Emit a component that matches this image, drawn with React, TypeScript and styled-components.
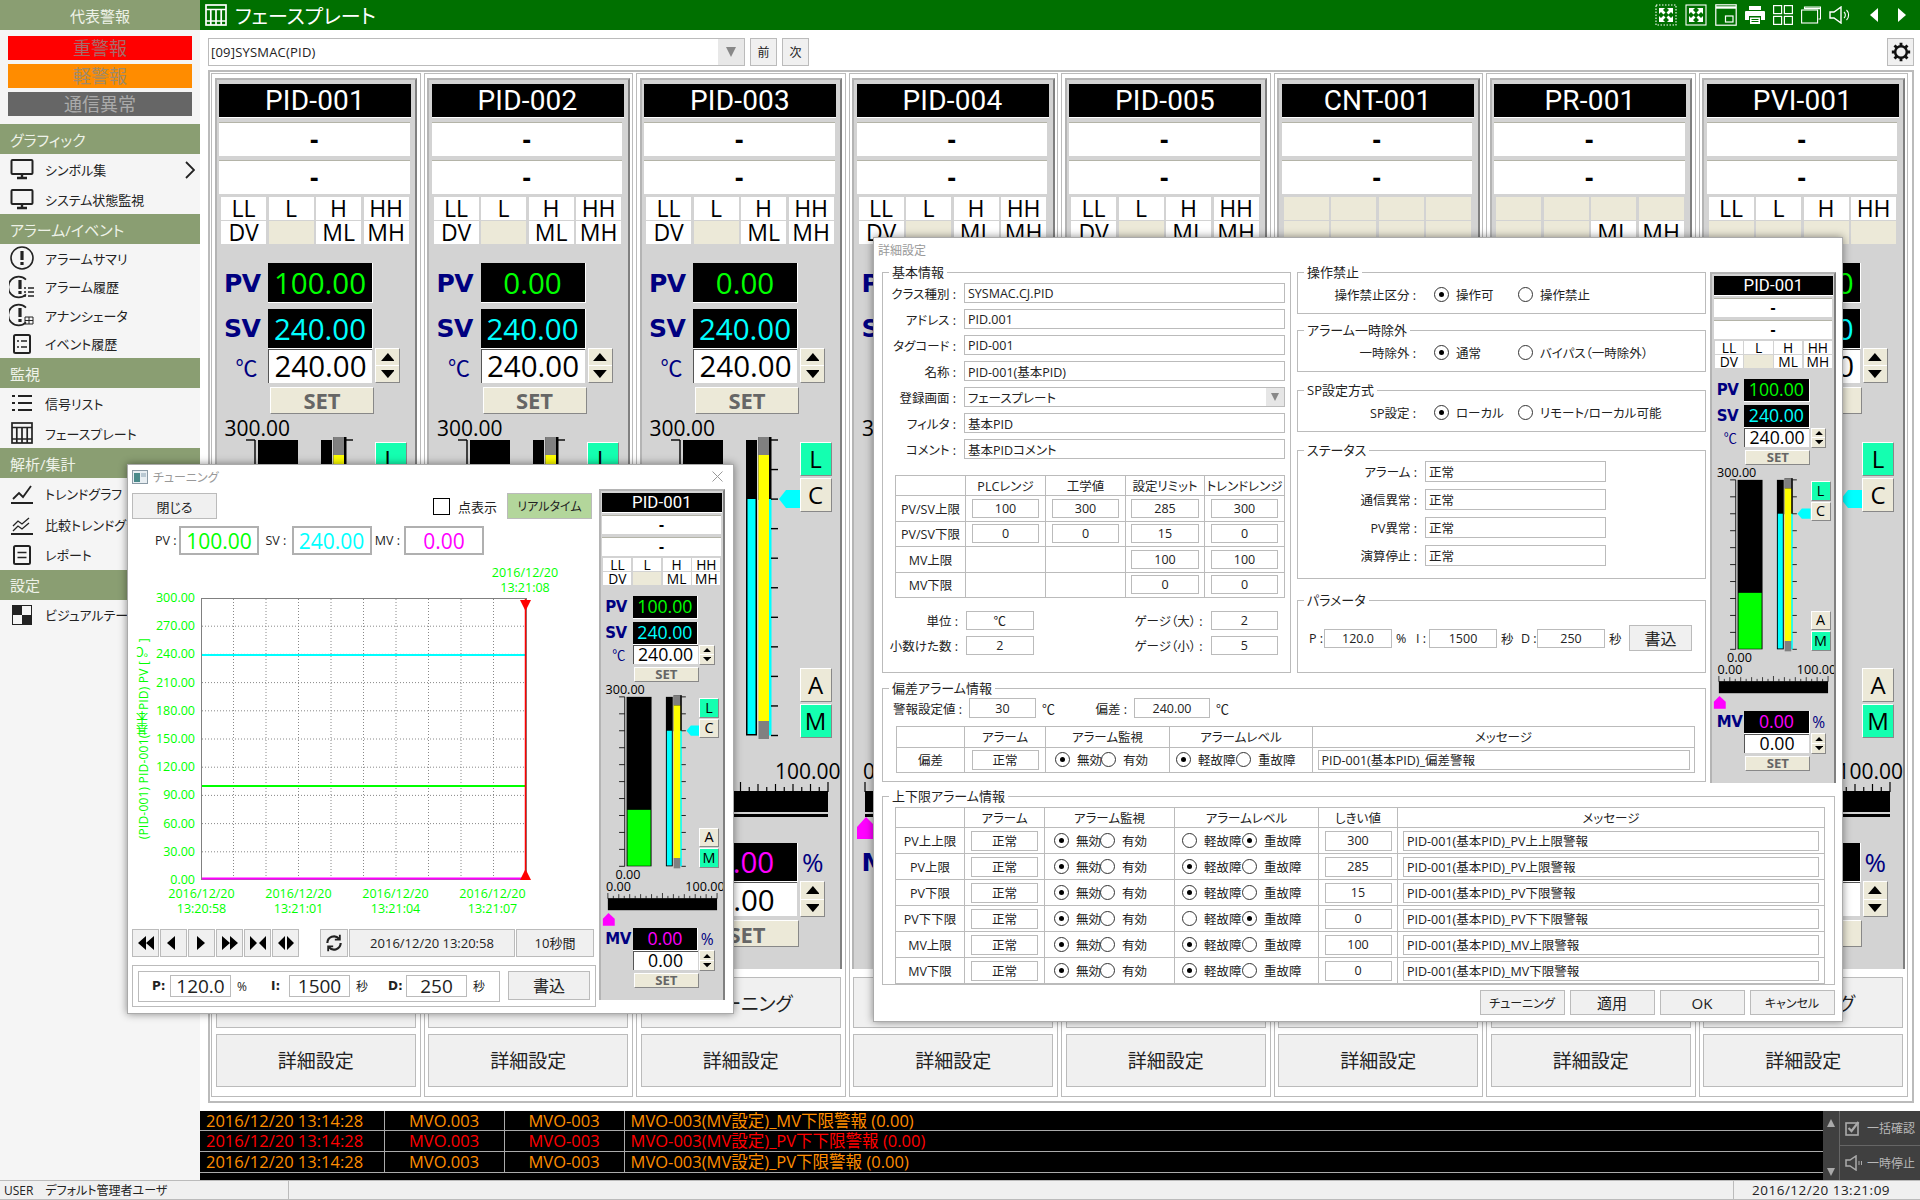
import React from "react";
import styled, { createGlobalStyle } from "styled-components";

const FONT = `"Open Sans", "Noto Sans CJK JP", sans-serif`;
const sx = (n: number) => `calc(var(--sx) * ${n}px)`;
const sy = (n: number) => `calc(var(--sy) * ${n}px)`;
const sf = (n: number) => `calc(var(--sf) * ${n}px)`;

const Global = createGlobalStyle`
  html, body { margin: 0; padding: 0; width: 1920px; height: 1200px; overflow: hidden; background: #fff; }
  body { font-family: ${FONT}; font-feature-settings: "palt"; color: #222; }
  * { box-sizing: border-box; }
`;

const Page = styled.div`
  position: relative;
  width: 1920px;
  height: 1200px;
  display: grid;
  grid-template-columns: 200px 1720px;
  grid-template-rows: 1180px 20px;
  overflow: hidden;
`;

/* ---------- sidebar ---------- */
const Sidebar = styled.aside`
  background: #f5f5f5;
  display: flex;
  flex-direction: column;
`;
const SideHead = styled.div<{ $center?: boolean }>`
  height: 30px;
  flex: none;
  background: #8a9e72;
  color: #eef2e8;
  font-size: 15px;
  display: flex;
  align-items: center;
  justify-content: ${(p) => (p.$center ? "center" : "flex-start")};
  padding-left: ${(p) => (p.$center ? 0 : 10)}px;
`;
const AlertStack = styled.div`
  display: flex;
  flex-direction: column;
  gap: 4px;
  padding: 6px 8px 8px;
`;
const AlertBox = styled.div<{ $bg: string; $fg: string }>`
  height: 24px;
  background: ${(p) => p.$bg};
  color: ${(p) => p.$fg};
  font-size: 18px;
  line-height: 24px;
  text-align: center;
`;
const SideItem = styled.div<{ $h: number }>`
  height: ${(p) => p.$h}px;
  flex: none;
  display: flex;
  align-items: center;
  position: relative;
  font-size: 13px;
  color: #222;
  white-space: nowrap;
`;
const SideIcon = styled.span`
  width: 45px;
  flex: none;
  display: flex;
  justify-content: center;
  padding-right: 2px;
`;
const Chevron = styled.svg`
  position: absolute;
  right: 5px;
  top: 7px;
`;

const Ic = ({ children, w = 26, h = 24 }: { children: React.ReactNode; w?: number; h?: number }) => (
  <svg width={w} height={h} viewBox="0 0 26 24" fill="none" stroke="#222" strokeWidth="2">{children}</svg>
);
const MonitorIcon = () => (
  <Ic>
    <rect x="2.5" y="3" width="21" height="14" rx="1" />
    <path d="M13 17v3M8 21h10" strokeWidth="2.4" />
  </Ic>
);
const AlarmGlyph = ({ open }: { open?: boolean }) => (
  <>
    {open ? <path d="M17 4.6A10.4 10.4 0 1 0 17 19.4" strokeWidth="1.6" /> : <circle cx="13" cy="12" r="11" strokeWidth="1.6" />}
    <path d={open ? "M11 5v9" : "M13 5v9"} strokeWidth="3.2" />
    <path d={open ? "M11 16v3" : "M13 16v3"} strokeWidth="3.2" />
  </>
);
const AlarmIcon = () => <Ic><AlarmGlyph /></Ic>;
const AlarmHistIcon = () => (
  <Ic>
    <AlarmGlyph open />
    <path d="M15 13h2M19 13h6M15 17h2M19 17h6M15 21h2M19 21h6" strokeWidth="1.3" />
  </Ic>
);
const AnnunIcon = () => (
  <Ic>
    <AlarmGlyph open />
    <path d="M16 14h8v7h-8zM20 14v7M16 17.5h8" strokeWidth="1" />
  </Ic>
);
const EventIcon = () => (
  <Ic>
    <rect x="5" y="3" width="16" height="18" rx="1.5" />
    <path d="M8 9h2M12 9h6M8 15h2M12 15h6" strokeWidth="1.6" />
  </Ic>
);
const ListIcon = () => (
  <Ic>
    <path d="M3 5h3M9 5h14M3 12h3M9 12h14M3 19h3M9 19h14" strokeWidth="2" />
  </Ic>
);
const GridIcon = ({ c = "#222" }: { c?: string }) => (
  <svg width="22" height="22" viewBox="0 0 22 22" fill="none" stroke={c} strokeWidth="1.7">
    <rect x="1" y="1" width="20" height="20" />
    <path d="M1 5.5h20M1 17h20M5.8 5.5V21M11 5.5V21M16.2 5.5V21" />
  </svg>
);
const TrendIcon = () => (
  <Ic>
    <path d="M2 22h22" />
    <path d="M4 18l6-6 4 4 8-11" strokeWidth="1.8" />
  </Ic>
);
const CompareIcon = () => (
  <Ic>
    <path d="M2 22h22" />
    <path d="M4 14l5-5 4 3 7-6M4 19l5-5 4 3 7-6" strokeWidth="1.3" />
  </Ic>
);
const ReportIcon = () => (
  <Ic>
    <rect x="5" y="3" width="16" height="18" rx="1.5" />
    <path d="M8.5 9.5h9M8.5 14.5h9" strokeWidth="1.6" />
  </Ic>
);
const ThemeIcon = () => (
  <svg width="20" height="20" viewBox="0 0 20 20">
    <rect width="20" height="20" fill="#222" />
    <rect x="10" width="10" height="10" fill="#f5f5f5" />
    <rect y="10" width="10" height="10" fill="#f5f5f5" />
    <rect x=".5" y=".5" width="19" height="19" fill="none" stroke="#222" />
  </svg>
);

/* ---------- main area ---------- */
const Main = styled.main`
  display: flex;
  flex-direction: column;
  min-width: 0;
`;
const TitleBar = styled.header`
  height: 30px;
  flex: none;
  background: #007000;
  color: #fff;
  display: flex;
  align-items: center;
  padding-left: 5px;
  font-size: 20px;
`;
const TitleText = styled.span`
  margin-left: 8px;
`;
const TopIcons = styled.div`
  margin-left: auto;
  margin-right: 14px;
  display: flex;
  align-items: center;
  gap: 8px;
`;
const TriBtn = styled.svg`
  margin-left: 12px;
`;
const Toolbar = styled.div`
  height: 40px;
  flex: none;
  display: flex;
  align-items: flex-start;
  padding: 8px 6px 0 8px;
  gap: 5px;
`;
const SelectBox = styled.div`
  width: 537px;
  height: 28px;
  border: 1px solid #bbb;
  display: flex;
  align-items: center;
  padding-left: 2px;
  font-size: 13px;
  letter-spacing: 0.2px;
`;
const SelectArrow = styled.span`
  margin-left: auto;
  width: 26px;
  height: 100%;
  background: #e8e8e8;
  display: flex;
  align-items: center;
  justify-content: center;
`;
const ToolBtn = styled.div`
  width: 27px;
  height: 28px;
  background: #f0f0f0;
  border: 1px solid #bbb;
  font-size: 12px;
  display: flex;
  align-items: center;
  justify-content: center;
`;
const GearBtn = styled(ToolBtn)`
  margin-left: auto;
`;
const Frame = styled.section`
  width: 1706px;
  margin-left: 8px;
  height: 1033px;
  flex: none;
  border: 2px solid #bbb;
  padding: 1px 0 4px 1px;
  display: grid;
  grid-template-columns: repeat(8, 209.5px);
  column-gap: 3px;
`;
const Column = styled.div`
  border: 1px solid #bbb;
  padding: 4px 2px 0;
  display: flex;
  flex-direction: column;
  align-items: center;
`;
const BigBtn = styled.div<{ $h: number; $mt: number }>`
  width: 200px;
  height: ${(p) => p.$h}px;
  margin-top: ${(p) => p.$mt}px;
  flex: none;
  background: #f0f0f0;
  border: 1px solid #bbb;
  font-size: 19px;
  display: flex;
  align-items: center;
  justify-content: center;
`;

/* ---------- faceplate ---------- */
const Plate = styled.div<{ $small?: boolean }>`
  --sx: ${(p) => (p.$small ? 0.624 : 1)};
  --sy: ${(p) => (p.$small ? 0.5735 : 1)};
  --sf: ${(p) => (p.$small ? 0.6 : 1)};
  width: ${sx(202.5)};
  height: ${sy(891)};
  flex: none;
  background: #d3d3d3;
  border-top: 2px solid #b4b4b4;
  border-left: 2px solid #b4b4b4;
  border-right: 2px solid #808080;
  padding-top: ${sy(4)};
  display: flex;
  flex-direction: column;
  align-items: flex-start;
  color: #000;
  line-height: 1;
  overflow: hidden;
`;
const PlateTitle = styled.div`
  width: ${sx(192)};
  height: ${sy(34)};
  margin-left: ${sx(2.5)};
  flex: none;
  background: #000;
  color: #fff;
  font-family: Roboto, sans-serif;
  font-size: ${sf(28)};
  letter-spacing: ${sf(0.2)};
  display: flex;
  align-items: center;
  justify-content: center;
  border-bottom: 1px solid #fff;
`;
const PlateLine = styled.div<{ $mt: number }>`
  width: ${sx(190.5)};
  height: ${sy(34)};
  margin: ${(p) => sy(p.$mt)} 0 0 ${sx(2.5)};
  flex: none;
  background: #fff;
  border-top: 1px solid #b4b4a8;
  font-size: ${sf(26)};
  font-weight: 700;
  display: flex;
  align-items: center;
  justify-content: center;
`;
const TagGrid = styled.div`
  width: ${sx(187.5)};
  height: ${sy(47)};
  margin: ${sy(3.3)} 0 0 ${sx(4.6)};
  flex: none;
  display: grid;
  grid-template-columns: repeat(4, 1fr);
  grid-template-rows: 1fr 1fr;
  column-gap: ${sx(2.5)};
  row-gap: 1px;
`;
const TagCell = styled.div<{ $blank: boolean }>`
  background: ${(p) => (p.$blank ? "#ece9d8" : "#fff")};
  font-size: ${sf(23)};
  display: flex;
  align-items: center;
  justify-content: center;
  overflow: hidden;
`;
const ReadRow = styled.div<{ $mt: number }>`
  height: ${sy(39.5)};
  margin-top: ${(p) => sy(p.$mt)};
  flex: none;
  display: flex;
  align-items: center;
`;
const RowLabel = styled.span`
  width: ${sx(51.5)};
  flex: none;
  padding-left: ${sx(7.5)};
  font-family: "DejaVu Sans", sans-serif;
  font-weight: 700;
  font-size: ${sf(25)};
  color: #000080;
  letter-spacing: ${sf(-0.6)};
`;
const Read = styled.div<{ $c: string }>`
  width: ${sx(105)};
  height: 100%;
  flex: none;
  background: #000;
  border-right: 1px solid #fff;
  border-bottom: 1px solid #fff;
  color: ${(p) => p.$c};
  font-size: ${sf(29.5)};
  display: flex;
  align-items: center;
  justify-content: center;
`;
const Pct = styled.span`
  margin-left: ${sx(4)};
  font-size: ${sf(26)};
  color: #000080;
`;
const InputRow = styled.div`
  height: ${sy(34)};
  flex: none;
  display: flex;
  align-items: center;
`;
const UnitLabel = styled.span`
  width: ${sx(51.5)};
  flex: none;
  padding-left: ${sx(19)};
  font-size: ${sf(22)};
  color: #000080;
  font-family: "Noto Sans CJK JP", sans-serif;
`;
const PlateInput = styled.div`
  width: ${sx(104)};
  height: 100%;
  flex: none;
  background: #fff;
  border-top: 1px solid #555;
  border-left: 1px solid #555;
  font-size: ${sf(29.5)};
  display: flex;
  align-items: center;
  justify-content: center;
`;
const Spin = styled.div`
  width: ${sx(25)};
  height: 104%;
  margin-left: ${sx(3)};
  flex: none;
  display: flex;
  flex-direction: column;
  background: #ece9d8;
  border-right: 1px solid #888;
  border-bottom: 1px solid #888;
  border-top: 1px solid #fff;
  border-left: 1px solid #fff;
`;
const SpinPart = styled.span`
  flex: 1;
  display: flex;
  align-items: center;
  justify-content: center;
  &:first-child { border-bottom: 1px solid #fff; }
`;
const SetBtn = styled.div<{ $mt: number }>`
  width: ${sx(104)};
  height: ${sy(27)};
  margin: ${(p) => sy(p.$mt)} 0 0 ${sx(53.5)};
  flex: none;
  background: #ece9d8;
  border-top: 1px solid #fff;
  border-left: 1px solid #fff;
  border-right: 1px solid #888;
  border-bottom: 1px solid #888;
  color: #666;
  font-weight: 700;
  font-size: ${sf(22)};
  display: flex;
  align-items: center;
  justify-content: center;
`;
const ScaleText = styled.div`
  height: ${sy(22)};
  margin: ${sy(4)} 0 0 ${sx(8)};
  flex: none;
  font-size: ${sf(21)};
  display: flex;
  align-items: center;
`;
const GaugeRow = styled.div`
  height: ${sy(308)};
  margin-top: ${sy(-5)};
  flex: none;
  display: flex;
`;
const GaugeSvg = styled.svg`
  width: ${sx(158)};
  height: 100%;
  flex: none;
`;
const GaugeBtns = styled.div`
  width: ${sx(32)};
  padding-top: ${sy(7)};
  flex: none;
  display: flex;
  flex-direction: column;
`;
const GaugeBtn = styled.div<{ $on?: boolean; $mt?: number }>`
  height: ${sy(34)};
  margin-top: ${(p) => (p.$mt ? sy(p.$mt) : 0)};
  flex: none;
  background: ${(p) => (p.$on ? "#14ffb0" : "#ece9d8")};
  border-top: 1px solid #fff;
  border-left: 1px solid #fff;
  border-right: 1px solid #888;
  border-bottom: 1px solid #888;
  font-size: ${sf(24)};
  display: flex;
  align-items: center;
  justify-content: center;
`;
const ZeroText = styled.div`
  height: ${sy(20)};
  margin: ${sy(-2)} 0 0 ${sx(24)};
  flex: none;
  font-size: ${sf(21)};
  display: flex;
  align-items: center;
`;
const RangeText = styled.div`
  width: ${sx(190)};
  height: ${sy(21)};
  margin-left: ${sx(9)};
  flex: none;
  font-size: ${sf(21)};
  display: flex;
  align-items: center;
  justify-content: space-between;
`;
const HGaugeSvg = styled.svg`
  width: ${sx(198)};
  height: ${sy(58)};
  flex: none;
`;

const TriSmall = ({ up }: { up?: boolean }) => (
  <svg width="60%" height="50%" viewBox="0 0 10 6" preserveAspectRatio="none">
    <polygon points={up ? "5,0 10,6 0,6" : "0,0 10,0 5,6"} fill="#000" />
  </svg>
);

const Spinner = () => (
  <Spin>
    <SpinPart><TriSmall up /></SpinPart>
    <SpinPart><TriSmall /></SpinPart>
  </Spin>
);

const VGauge = ({ pv }: { pv: number }) => {
  const ticks = Array.from({ length: 11 }, (_, i) => 5 + i * 29.55);
  const greenTop = 5 + (1 - pv / 300) * 295.5;
  return (
    <GaugeSvg viewBox="0 0 158 308" preserveAspectRatio="none">
      <path d="M38 5V300.5" stroke="#000" strokeWidth="1.4" />
      {ticks.map((y) => (
        <path key={y} d={`M29 ${y}H38`} stroke="#000" strokeWidth="1.4" />
      ))}
      <rect x="41" y="5" width="40" height="295.5" fill="#000" />
      {pv > 0 && <rect x="42.5" y={greenTop} width="37" height={299.5 - greenTop} fill="#0f0" />}
      <rect x="104" y="5" width="11" height="295.5" fill="#000" />
      <rect x="105.5" y="64" width="8" height="235" fill="#0ff" />
      <rect x="116.5" y="2" width="13" height="63" fill="#000" />
      <rect x="126.5" y="64" width="3" height="236.5" fill="#0ff" />
      <rect x="116.5" y="2" width="10.5" height="18" fill="#808080" />
      <rect x="116.5" y="20" width="10.5" height="266" fill="#ff0" />
      <rect x="116.5" y="286" width="10.5" height="18" fill="#808080" />
      {ticks.map((y) => (
        <path key={y} d={`M129 ${y}H136`} stroke="#000" strokeWidth="1.4" />
      ))}
      <polygon points="137,64 144,55 158,55 158,73 144,73" fill="#0ff" />
    </GaugeSvg>
  );
};

const HGauge = ({ big }: { big?: boolean }) => {
  const ticks = Array.from({ length: 21 }, (_, i) => 11 + i * 8.75);
  return (
    <HGaugeSvg viewBox="0 0 198 58" preserveAspectRatio="none">
      {ticks.map((x, i) => (
        <path key={x} d={`M${x} ${i % 10 === 0 ? 0 : i % 2 === 0 ? 2 : 5}V10`} stroke="#000" strokeWidth="1.2" />
      ))}
      <rect x="11" y="9" width="175" height="21" fill="#000" />
      {big && <rect x="11" y="32" width="175" height="3" fill="#000" />}
      <polygon points="12,35 22,45 22,57 3,57 3,45" fill="#f0f" />
    </HGaugeSvg>
  );
};

type PlateProps = {
  tag: string;
  pv: string;
  pvNum: number;
  rows: string[][];
  small?: boolean;
};

const Faceplate = ({ tag, pv, pvNum, rows, small }: PlateProps) => (
  <Plate $small={small}>
    <PlateTitle>{tag}</PlateTitle>
    <PlateLine $mt={3.7}>-</PlateLine>
    <PlateLine $mt={4.3}>-</PlateLine>
    <TagGrid>
      {rows.flat().map((t, i) => (
        <TagCell key={i} $blank={t === ""}>{t}</TagCell>
      ))}
    </TagGrid>
    <ReadRow $mt={19}>
      <RowLabel>PV</RowLabel>
      <Read $c="#00ff00">{pv}</Read>
    </ReadRow>
    <ReadRow $mt={6.3}>
      <RowLabel>SV</RowLabel>
      <Read $c="#00ffff">240.00</Read>
    </ReadRow>
    <InputRow>
      <UnitLabel>℃</UnitLabel>
      <PlateInput>240.00</PlateInput>
      <Spinner />
    </InputRow>
    <SetBtn $mt={4}>SET</SetBtn>
    <ScaleText>300.00</ScaleText>
    <GaugeRow>
      <VGauge pv={pvNum} />
      <GaugeBtns>
        <GaugeBtn $on>L</GaugeBtn>
        <GaugeBtn $mt={2}>C</GaugeBtn>
        <GaugeBtn $mt={156}>A</GaugeBtn>
        <GaugeBtn $on $mt={2}>M</GaugeBtn>
      </GaugeBtns>
    </GaugeRow>
    <ZeroText>0.00</ZeroText>
    <RangeText><span>0.00</span><span>100.00</span></RangeText>
    <HGauge big={!small} />
    <ReadRow $mt={3}>
      <RowLabel>MV</RowLabel>
      <Read $c="#ff00ff">0.00</Read>
      <Pct>%</Pct>
    </ReadRow>
    <InputRow>
      <UnitLabel />
      <PlateInput>0.00</PlateInput>
      <Spinner />
    </InputRow>
    <SetBtn $mt={4}>SET</SetBtn>
  </Plate>
);

/* ---------- alarm bar ---------- */
const AlarmBar = styled.section`
  height: 69.5px;
  margin-top: 7.5px;
  flex: none;
  display: flex;
  background: #404040;
`;
const AlarmList = styled.div`
  width: 1623px;
  flex: none;
  background: #000;
  overflow: hidden;
`;
const AlarmRow = styled.div<{ $c: string }>`
  height: 20.7px;
  display: grid;
  grid-template-columns: 184.6px 120px 120px 1fr;
  border-bottom: 1px solid #aaa;
  color: ${(p) => p.$c};
  font-size: 16.5px;
  line-height: 19px;
  white-space: nowrap;
`;
const AlarmCell = styled.span<{ $center?: boolean }>`
  border-right: 1px solid #aaa;
  text-align: ${(p) => (p.$center ? "center" : "left")};
  padding-left: ${(p) => (p.$center ? 0 : 6)}px;
  &:last-child { border-right: none; }
`;
const ScrollCol = styled.div`
  width: 17px;
  flex: none;
  display: flex;
  flex-direction: column;
  justify-content: space-between;
  align-items: center;
  padding: 8px 0 4px;
  border-right: 1px solid #666;
`;
const SideBtns = styled.div`
  flex: 1;
  display: flex;
  flex-direction: column;
`;
const SideBtn = styled.div`
  flex: 1;
  display: flex;
  align-items: center;
  gap: 4px;
  padding-left: 5px;
  color: #b8b8b8;
  font-size: 12px;
  white-space: nowrap;
  &:first-child { border-bottom: 1px solid #666; }
`;

/* ---------- status ---------- */
const StatusBar = styled.footer`
  grid-column: 1 / -1;
  background: #f0f0f0;
  border-top: 1px solid #bbb;
  border-bottom: 1px solid #bbb;
  display: flex;
  font-size: 12px;
  align-items: stretch;
`;
const StatusCell = styled.div<{ $w?: number; $right?: boolean }>`
  width: ${(p) => (p.$w ? `${p.$w}px` : "auto")};
  flex: ${(p) => (p.$w ? "none" : "1")};
  border-right: ${(p) => (p.$right ? "none" : "1px solid #bbb")};
  padding-left: ${(p) => (p.$right ? 18 : 4)}px;
  font-size: ${(p) => (p.$right ? 13.5 : 12)}px;
  letter-spacing: ${(p) => (p.$right ? 0.5 : 0)}px;
  display: flex;
  align-items: center;
  gap: 12px;
  white-space: nowrap;
`;

/* ---------- windows ---------- */
const Win = styled.div<{ $x: number; $y: number; $w: number; $h: number }>`
  position: absolute;
  left: ${(p) => p.$x}px;
  top: ${(p) => p.$y}px;
  width: ${(p) => p.$w}px;
  height: ${(p) => p.$h}px;
  background: #fff;
  box-shadow: 0 0 8px rgba(0, 0, 0, 0.45);
  border: 1px solid #aaa;
`;
const WinTitle = styled.div`
  height: 24px;
  display: flex;
  align-items: center;
  color: #999;
  font-size: 12px;
  padding-left: 4px;
  gap: 5px;
`;
const CloseX = styled.svg`
  position: absolute;
  right: 10px;
  top: 6px;
`;
const TuneBody = styled.div`
  display: flex;
  padding-left: 4px;
`;
const TuneLeft = styled.div`
  width: 466.5px;
  flex: none;
`;
const TuneTop = styled.div`
  display: flex;
  align-items: center;
  margin-top: 4px;
  height: 26px;
`;
const FlatBtn = styled.div<{ $w: number; $h?: number; $fs?: number; $bg?: string }>`
  width: ${(p) => p.$w}px;
  height: ${(p) => (p.$h ? `${p.$h}px` : "100%")};
  flex: none;
  background: ${(p) => p.$bg || "#f0f0f0"};
  border: 1px solid #bbb;
  font-size: ${(p) => p.$fs || 13}px;
  display: flex;
  align-items: center;
  justify-content: center;
  white-space: nowrap;
`;
const Check = styled.span`
  width: 17px;
  height: 17px;
  margin-left: 216px;
  border: 1px solid #000;
  flex: none;
`;
const CheckLabel = styled.span`
  margin: 0 10px 0 8px;
  font-size: 13px;
  width: 39px;
  white-space: nowrap;
`;
const ValueRow = styled.div`
  display: flex;
  align-items: center;
  height: 29px;
  margin-top: 7px;
  padding-left: 23px;
`;
const ValueLabel = styled.span<{ $w: number }>`
  width: ${(p) => p.$w}px;
  flex: none;
  font-size: 12.5px;
  white-space: nowrap;
`;
const ValueBox = styled.div<{ $c: string }>`
  width: 80px;
  height: 100%;
  flex: none;
  border: 2px solid #b0b0b0;
  color: ${(p) => p.$c};
  font-size: 21px;
  display: flex;
  align-items: center;
  justify-content: center;
`;
const Stamp = styled.div<{ $c?: string }>`
  color: #00ff00;
  font-size: 12.5px;
  line-height: 15px;
  text-align: center;
  white-space: nowrap;
`;
const TopStamp = styled(Stamp)`
  width: 100px;
  margin: 10px 0 3px 343px;
`;
const ChartRow = styled.div`
  display: flex;
  align-items: flex-start;
  height: 282px;
`;
const AxisTitle = styled.div`
  width: 22px;
  flex: none;
  align-self: center;
  writing-mode: vertical-rl;
  transform: rotate(180deg);
  font-size: 12px;
  color: #00ff00;
  white-space: nowrap;
  display: flex;
  align-items: center;
  justify-content: center;
  letter-spacing: 0.2px;
`;
const YLabels = styled.div`
  width: 41px;
  height: 296px;
  margin-top: -7px;
  flex: none;
  display: flex;
  flex-direction: column;
  justify-content: space-between;
  align-items: flex-end;
  color: #00ff00;
  font-size: 12.5px;
  line-height: 14px;
`;
const PlotSvg = styled.svg`
  width: 326px;
  height: 282px;
  margin-left: 6px;
  flex: none;
  overflow: visible;
  border: 0;
`;
const XLabels = styled.div`
  display: flex;
  margin: 6px 0 0 21px;
`;
const XItem = styled(Stamp)`
  width: 97px;
  flex: none;
`;
const Transport = styled.div`
  height: 27.5px;
  margin-top: 13px;
  display: flex;
  gap: 1px;
`;
const TBtn = styled.div<{ $w: number; $ml?: number }>`
  width: ${(p) => p.$w}px;
  margin-left: ${(p) => p.$ml || 0}px;
  flex: none;
  background: #f0f0f0;
  border: 1px solid #bbb;
  font-size: 13px;
  display: flex;
  align-items: center;
  justify-content: center;
  white-space: nowrap;
`;
const WriteOuter = styled.div`
  width: 464px;
  height: 42px;
  margin-top: 8px;
  border: 1px solid #bbb;
  padding: 5px 5px 0 5px;
  display: flex;
  align-items: flex-start;
  gap: 8px;
`;
const WriteBox = styled.div`
  width: 362px;
  height: 31px;
  flex: none;
  border: 1px solid #bbb;
  display: flex;
  align-items: center;
  padding-left: 13px;
`;
const WLabel = styled.b<{ $ml?: number }>`
  width: 18px;
  margin-left: ${(p) => p.$ml || 0}px;
  flex: none;
  font-family: "DejaVu Sans", sans-serif;
  font-size: 12px;
`;
const WInput = styled.div`
  width: 61px;
  height: 22px;
  flex: none;
  border: 1px solid #bbb;
  font-size: 19px;
  display: flex;
  align-items: center;
  justify-content: center;
`;
const WUnit = styled.span`
  margin-left: 6px;
  font-size: 12px;
  width: 14px;
`;

/* detail dialog */
const DetailBody = styled.div`
  padding: 10px 0 0 8px;
`;
const DetailTop = styled.div`
  display: flex;
  gap: 4px;
  align-items: flex-start;
`;
const DetailLeft = styled.div`
  width: 824px;
  flex: none;
`;
const TwoCols = styled.div`
  display: flex;
  justify-content: space-between;
`;
const Stack = styled.div`
  width: 409px;
  flex: none;
  display: flex;
  flex-direction: column;
`;
const Group = styled.div<{ $h: number; $mt?: number; $w?: number }>`
  position: relative;
  height: ${(p) => p.$h}px;
  width: ${(p) => (p.$w ? `${p.$w}px` : "auto")};
  margin-top: ${(p) => p.$mt || 0}px;
  flex: none;
  border: 1px solid #bbb;
`;
const Legend = styled.span`
  position: absolute;
  left: 6px;
  top: -10px;
  padding: 0 3px;
  background: #fff;
  font-size: 13px;
  line-height: 18px;
  white-space: nowrap;
`;
const FormRows = styled.div`
  padding-top: 10px;
  display: flex;
  flex-direction: column;
  gap: 6px;
`;
const FormRow = styled.div`
  display: grid;
  grid-template-columns: 73px 320.5px;
  column-gap: 8px;
  height: 20px;
  align-items: center;
`;
const FormLabel = styled.span`
  text-align: right;
  font-size: 12.5px;
  white-space: nowrap;
`;
const Field = styled.div<{ $w?: number; $center?: boolean; $h?: number; $ml?: number }>`
  width: ${(p) => (p.$w ? `${p.$w}px` : "100%")};
  height: ${(p) => p.$h || 19}px;
  margin-left: ${(p) => p.$ml || 0}px;
  flex: none;
  border: 1px solid #bbb;
  background: #fff;
  font-size: 12.5px;
  padding: 0 ${(p) => (p.$center ? 0 : 3)}px;
  display: flex;
  align-items: center;
  justify-content: ${(p) => (p.$center ? "center" : "flex-start")};
  white-space: nowrap;
  overflow: hidden;
  position: relative;
`;
const FieldArrow = styled.span`
  position: absolute;
  right: 0;
  top: 0;
  bottom: 0;
  width: 18px;
  background: #e6e6e6;
  display: flex;
  align-items: center;
  justify-content: center;
`;
const GridTable = styled.table<{ $mt: number; $ml: number; $w: number }>`
  border-collapse: collapse;
  table-layout: fixed;
  width: ${(p) => p.$w}px;
  margin: ${(p) => p.$mt}px 0 0 ${(p) => p.$ml}px;
  font-size: 12.5px;
  td, th {
    border: 1px solid #bbb;
    padding: 0;
    font-weight: 400;
    text-align: center;
    white-space: nowrap;
  }
`;
const TCol = styled.col<{ $w: number }>`
  width: ${(p) => p.$w}px;
`;
const TRow = styled.tr<{ $h: number }>`
  height: ${(p) => p.$h}px;
`;
const CellInner = styled.div`
  display: flex;
  align-items: center;
  justify-content: center;
`;
const BottomFields = styled.div`
  display: grid;
  grid-template-columns: 75px 67.5px 1fr 67.5px;
  column-gap: 8px;
  row-gap: 6px;
  margin-top: 12.5px;
  width: 395px;
  align-items: center;
  font-size: 12.5px;
`;
const GaugeLabel = styled.span`
  text-align: right;
  white-space: nowrap;
`;
const RadioRow = styled.div<{ $h: number }>`
  height: ${(p) => p.$h}px;
  display: flex;
  align-items: center;
  font-size: 12.5px;
  white-space: nowrap;
`;
const RadioLabel = styled.span`
  width: 118px;
  text-align: right;
  flex: none;
`;
const Radio = styled.span<{ $on?: boolean; $ml?: number }>`
  width: 15px;
  height: 15px;
  margin-left: ${(p) => p.$ml || 0}px;
  flex: none;
  border-radius: 50%;
  border: 1px solid #333;
  display: inline-flex;
  align-items: center;
  justify-content: center;
  &::after {
    content: "";
    width: 5px;
    height: 5px;
    border-radius: 50%;
    background: ${(p) => (p.$on ? "#000" : "transparent")};
  }
`;
const RadioText = styled.span<{ $w?: number }>`
  margin-left: 7px;
  width: ${(p) => (p.$w ? `${p.$w}px` : "auto")};
  flex: none;
`;
const StatusRows = styled.div`
  padding-top: 10px;
  display: flex;
  flex-direction: column;
  gap: 7px;
`;
const StatusRow = styled.div`
  display: flex;
  align-items: center;
  font-size: 12.5px;
  height: 21px;
`;
const StatusLabel = styled.span`
  width: 119px;
  text-align: right;
  margin-right: 8px;
  white-space: nowrap;
`;
const ParamRow = styled.div`
  display: flex;
  align-items: center;
  height: 26px;
  margin: 24px 0 0 11px;
  font-size: 12.5px;
`;
const ParamLabel = styled.span<{ $w: number; $ml?: number }>`
  width: ${(p) => p.$w}px;
  margin-left: ${(p) => p.$ml || 0}px;
  flex: none;
`;
const DevRow = styled.div`
  display: flex;
  align-items: center;
  height: 20px;
  margin-top: 9px;
  font-size: 12.5px;
`;
const DevLabel = styled.span<{ $w: number }>`
  width: ${(p) => p.$w}px;
  text-align: right;
  margin-right: 7px;
  flex: none;
  white-space: nowrap;
`;
const Cel = styled.span`
  margin: 0 0 0 6px;
  font-family: "Noto Sans CJK JP", sans-serif;
  font-size: 13px;
`;
const DialogBtns = styled.div`
  width: 952.5px;
  height: 25px;
  margin-top: 5px;
  display: flex;
  justify-content: flex-end;
  gap: 5px;
`;
const RadioCell = styled.div<{ $gap: number; $pl: number }>`
  display: flex;
  align-items: center;
  padding-left: ${(p) => p.$pl}px;
`;
const RText = styled.span<{ $w: number }>`
  width: ${(p) => p.$w}px;
  margin-left: 7px;
  flex: none;
  text-align: left;
`;

/* ---------- data ---------- */
const PID_ROWS = [["LL", "L", "H", "HH"], ["DV", "", "ML", "MH"]];
const PLATES: PlateProps[] = [
  { tag: "PID-001", pv: "100.00", pvNum: 100, rows: PID_ROWS },
  { tag: "PID-002", pv: "0.00", pvNum: 0, rows: PID_ROWS },
  { tag: "PID-003", pv: "0.00", pvNum: 0, rows: PID_ROWS },
  { tag: "PID-004", pv: "0.00", pvNum: 0, rows: PID_ROWS },
  { tag: "PID-005", pv: "0.00", pvNum: 0, rows: PID_ROWS },
  { tag: "CNT-001", pv: "0.00", pvNum: 0, rows: [["", "", "", ""], ["", "", "", ""]] },
  { tag: "PR-001", pv: "0.00", pvNum: 0, rows: [["", "", "", ""], ["", "", "ML", "MH"]] },
  { tag: "PVI-001", pv: "100.00", pvNum: 100, rows: [["LL", "L", "H", "HH"], ["", "", "", ""]] },
];

const ALARMS = [
  { c: "#ff8c00", m: "MVO-003(MV設定)_MV下限警報 (0.00)" },
  { c: "#ff0000", m: "MVO-003(MV設定)_PV下下限警報 (0.00)" },
  { c: "#ff8c00", m: "MVO-003(MV設定)_PV下限警報 (0.00)" },
];

const LIMITS = [
  { n: "PV上上限", heavy: true, t: "300", m: "PID-001(基本PID)_PV上上限警報" },
  { n: "PV上限", heavy: false, t: "285", m: "PID-001(基本PID)_PV上限警報" },
  { n: "PV下限", heavy: false, t: "15", m: "PID-001(基本PID)_PV下限警報" },
  { n: "PV下下限", heavy: true, t: "0", m: "PID-001(基本PID)_PV下下限警報" },
  { n: "MV上限", heavy: false, t: "100", m: "PID-001(基本PID)_MV上限警報" },
  { n: "MV下限", heavy: false, t: "0", m: "PID-001(基本PID)_MV下限警報" },
];

const RANGES: { n: string; v: string[] }[] = [
  { n: "PV/SV上限", v: ["100", "300", "285", "300"] },
  { n: "PV/SV下限", v: ["0", "0", "15", "0"] },
  { n: "MV上限", v: ["", "", "100", "100"] },
  { n: "MV下限", v: ["", "", "0", "0"] },
];

const FORM: [string, string][] = [
  ["クラス種別 :", "SYSMAC.CJ.PID"],
  ["アドレス :", "PID.001"],
  ["タグコード :", "PID-001"],
  ["名称 :", "PID-001(基本PID)"],
  ["登録画面 :", "フェースプレート"],
  ["フィルタ :", "基本PID"],
  ["コメント :", "基本PIDコメント"],
];

const SMALL_PLATE: PlateProps = { tag: "PID-001", pv: "100.00", pvNum: 100, rows: PID_ROWS, small: true };

const Tri = ({ d, c = "#888", s = 10 }: { d: "u" | "d" | "l" | "r"; c?: string; s?: number }) => {
  const pts = { u: "5,0 10,10 0,10", d: "0,0 10,0 5,10", l: "10,0 10,10 0,5", r: "0,0 10,5 0,10" }[d];
  return (
    <svg width={s} height={s} viewBox="0 0 10 10">
      <polygon points={pts} fill={c} />
    </svg>
  );
};

const ArrowsBox = ({ dashed }: { dashed?: boolean }) => (
  <svg width="22" height="22" viewBox="0 0 22 22" fill="none">
    <rect x="1" y="1" width="20" height="20" stroke="#fff" strokeWidth="1.1" strokeDasharray={dashed ? "1.5 1.5" : undefined} />
    <g fill="#fff">
      <path d="M4 4h6l-2 2 2.5 2.5-2 2L6 8 4 10zM18 4v6l-2-2-2.5 2.5-2-2L14 6l-2-2zM4 18v-6l2 2 2.5-2.5 2 2L8 16l2 2zM18 18h-6l2-2-2.5-2.5 2-2L16 14l2-2z" />
    </g>
  </svg>
);

const TitleIcons = () => (
  <TopIcons>
    <ArrowsBox dashed />
    <ArrowsBox />
    <svg width="22" height="22" viewBox="0 0 22 22" fill="none" stroke="#fff" strokeWidth="1.2">
      <rect x=".8" y=".8" width="20.4" height="20.4" />
      <path d="M1 3.5h20" strokeWidth="2.4" />
      <rect x="10.5" y="12" width="7.5" height="6" />
    </svg>
    <svg width="20" height="20" viewBox="0 0 20 20">
      <path d="M4 1h12v4H4zM1 6h18a1 1 0 0 1 1 1v8h-4v-4H4v4H0V7a1 1 0 0 1 1-1z" fill="#fff" />
      <path d="M5 12.5h10V19H5z" fill="#fff" />
      <path d="M6.5 14.5h7M6.5 16.5h7" stroke="#007000" />
    </svg>
    <svg width="20" height="20" viewBox="0 0 20 20" fill="none" stroke="#fff" strokeWidth="1.2">
      <rect x=".6" y=".6" width="8" height="8" />
      <rect x="11.4" y=".6" width="8" height="8" />
      <rect x=".6" y="11.4" width="8" height="8" />
      <rect x="11.4" y="11.4" width="8" height="8" />
    </svg>
    <svg width="20" height="18" viewBox="0 0 20 18" fill="none" stroke="#fff" strokeWidth="1.1">
      <path d="M3.5 3V1h16v12h-2" />
      <path d="M3.5 2.5h16" strokeWidth="1.6" />
      <rect x=".6" y="4" width="16" height="13" />
    </svg>
    <svg width="21" height="18" viewBox="0 0 21 18" fill="none" stroke="#fff" strokeWidth="1.4">
      <path d="M1 6h4l7-5v16l-7-5H1z" />
      <path d="M15 6a4 4 0 0 1 0 6M17.5 4a7 7 0 0 1 0 10" strokeWidth="1.1" />
    </svg>
    <TriBtn width="8" height="14" viewBox="0 0 8 14"><polygon points="8,0 8,14 0,7" fill="#fff" /></TriBtn>
    <TriBtn width="8" height="14" viewBox="0 0 8 14"><polygon points="0,0 8,7 0,14" fill="#fff" /></TriBtn>
  </TopIcons>
);

const Gear = () => (
  <svg width="20" height="20" viewBox="0 0 24 24" fill="none" stroke="#111" strokeWidth="3">
    <circle cx="12" cy="12" r="7" />
    <path d="M12 1v4M12 19v4M1 12h4M19 12h4M4.2 4.2l2.8 2.8M17 17l2.8 2.8M4.2 19.8L7 17M17 7l2.8-2.8" strokeWidth="3.4" />
  </svg>
);

const TransportIcon = ({ kind }: { kind: number }) => {
  const shapes = [
    "M9 0v14L1 7zM17 0v14L9 7z",
    "M10 0v14L2 7z",
    "M4 0v14l8-7z",
    "M1 0v14l8-7zM9 0v14l8-7z",
    "M1 0v14l7-7zM17 0v14l-7-7z",
    "M8 0v14L1 7zM10 0v14l7-7z",
  ][kind];
  return (
    <svg width="18" height="14" viewBox="0 0 18 14"><path d={shapes} fill="#000" /></svg>
  );
};

const Plot = () => {
  const vs = Array.from({ length: 9 }, (_, i) => 32.5 * (i + 1));
  const hs = Array.from({ length: 9 }, (_, i) => 28.2 * (i + 1));
  return (
    <PlotSvg viewBox="0 0 326 282">
      <rect x=".5" y=".5" width="325" height="281" fill="#fff" stroke="#808080" />
      {vs.map((x) => <path key={x} d={`M${x} 1V281`} stroke="#888" strokeDasharray="1 2" />)}
      {hs.map((y) => <path key={y} d={`M1 ${y}H325`} stroke="#888" strokeDasharray="1 2" />)}
      <path d="M1 57H324" stroke="#00ffff" strokeWidth="2" />
      <path d="M1 188H324" stroke="#00ff00" strokeWidth="2" />
      <path d="M1 280.5H324" stroke="#ff00ff" strokeWidth="2" />
      <path d="M324.5 1V281" stroke="#ff0000" strokeWidth="1.5" />
      <polygon points="319,2 330,2 324.5,13" fill="#ff0000" />
      <polygon points="319,282 330,282 324.5,271" fill="#ff0000" />
    </PlotSvg>
  );
};

const TuningWindow = () => (
  <Win $x={127} $y={464} $w={607} $h={550}>
    <WinTitle>
      <svg width="16" height="14" viewBox="0 0 16 14">
        <rect x=".5" y=".5" width="15" height="13" fill="#e8eef2" stroke="#8a9aa5" />
        <rect x="2" y="3" width="6" height="9" fill="#4a8a8a" />
        <rect x="9" y="3" width="5" height="4" fill="#b9c8d2" />
      </svg>
      チューニング
    </WinTitle>
    <CloseX width="11" height="11" viewBox="0 0 11 11">
      <path d="M.5 .5l10 10M10.5 .5l-10 10" stroke="#999" />
    </CloseX>
    <TuneBody>
      <TuneLeft>
        <TuneTop>
          <FlatBtn $w={85}>閉じる</FlatBtn>
          <Check />
          <CheckLabel>点表示</CheckLabel>
          <FlatBtn $w={85} $bg="#b3d69b" $fs={12}>リアルタイム</FlatBtn>
        </TuneTop>
        <ValueRow>
          <ValueLabel $w={24}>PV :</ValueLabel>
          <ValueBox $c="#00ff00">100.00</ValueBox>
          <ValueLabel $w={32.5}>&nbsp;&nbsp;SV :</ValueLabel>
          <ValueBox $c="#00ffff">240.00</ValueBox>
          <ValueLabel $w={32.5}>&nbsp;MV :</ValueLabel>
          <ValueBox $c="#ff00ff">0.00</ValueBox>
        </ValueRow>
        <TopStamp>2016/12/20<br />13:21:08</TopStamp>
        <ChartRow>
          <AxisTitle>(PID-001) PID-001(基本PID) PV [ ℃ ]</AxisTitle>
          <YLabels>
            {["300.00", "270.00", "240.00", "210.00", "180.00", "150.00", "120.00", "90.00", "60.00", "30.00", "0.00"].map((t) => (
              <span key={t}>{t}</span>
            ))}
          </YLabels>
          <Plot />
        </ChartRow>
        <XLabels>
          {["13:20:58", "13:21:01", "13:21:04", "13:21:07"].map((t) => (
            <XItem key={t}>2016/12/20<br />{t}</XItem>
          ))}
        </XLabels>
        <Transport>
          {[0, 1, 2, 3, 4, 5].map((k) => (
            <TBtn key={k} $w={27}><TransportIcon kind={k} /></TBtn>
          ))}
          <TBtn $w={28} $ml={20}>
            <svg width="20" height="20" viewBox="0 0 24 24" fill="none" stroke="#222" strokeWidth="2.6">
              <path d="M20 12a8 8 0 0 1-14 5.2M4 12a8 8 0 0 1 14-5.2" />
              <path d="M19 2v6h-6M5 22v-6h6" strokeWidth="2.2" />
            </svg>
          </TBtn>
          <TBtn $w={166}>2016/12/20 13:20:58</TBtn>
          <TBtn $w={78}>10秒間</TBtn>
        </Transport>
        <WriteOuter>
          <WriteBox>
            <WLabel>P:</WLabel><WInput>120.0</WInput><WUnit>%</WUnit>
            <WLabel $ml={20}>I:</WLabel><WInput>1500</WInput><WUnit>秒</WUnit>
            <WLabel $ml={18}>D:</WLabel><WInput>250</WInput><WUnit>秒</WUnit>
          </WriteBox>
          <FlatBtn $w={82} $h={29} $fs={16}>書込</FlatBtn>
        </WriteOuter>
      </TuneLeft>
      <Faceplate {...SMALL_PLATE} />
    </TuneBody>
  </Win>
);

const Sel = ({ on, ml }: { on: boolean; ml?: number }) => <Radio $on={on} $ml={ml} />;

const DetailWindow = () => (
  <Win $x={873} $y={237} $w={970} $h={785}>
    <WinTitle>詳細設定</WinTitle>
    <DetailBody>
      <DetailTop>
        <DetailLeft>
          <TwoCols>
            <Group $h={400.5} $w={409}>
              <Legend>基本情報</Legend>
              <FormRows>
                {FORM.map(([l, v], i) => (
                  <FormRow key={l}>
                    <FormLabel>{l}</FormLabel>
                    <Field $h={20}>
                      {v}
                      {i === 4 && <FieldArrow><Tri d="d" s={8} /></FieldArrow>}
                    </Field>
                  </FormRow>
                ))}
              </FormRows>
              <GridTable $mt={16} $ml={12} $w={389}>
                <colgroup>
                  <TCol $w={70} /><TCol $w={80} /><TCol $w={80} /><TCol $w={79} /><TCol $w={80} />
                </colgroup>
                <tbody>
                  <TRow $h={20}>
                    <td></td><td>PLCレンジ</td><td>工学値</td><td>設定リミット</td><td>トレンドレンジ</td>
                  </TRow>
                  {RANGES.map((r) => (
                    <TRow key={r.n} $h={25.5}>
                      <td>{r.n}</td>
                      {r.v.map((c, i) => (
                        <td key={i}>{c && <CellInner><Field $w={67.5} $center>{c}</Field></CellInner>}</td>
                      ))}
                    </TRow>
                  ))}
                </tbody>
              </GridTable>
              <BottomFields>
                <GaugeLabel>単位 :</GaugeLabel><Field $center>℃</Field>
                <GaugeLabel>ゲージ（大） :</GaugeLabel><Field $center>2</Field>
                <GaugeLabel>小数けた数 :</GaugeLabel><Field $center>2</Field>
                <GaugeLabel>ゲージ（小） :</GaugeLabel><Field $center>5</Field>
              </BottomFields>
            </Group>
            <Stack>
              <Group $h={42}>
                <Legend>操作禁止</Legend>
                <RadioRow $h={42}>
                  <RadioLabel>操作禁止区分 :</RadioLabel>
                  <Radio $on $ml={18} /><RadioText $w={62}>操作可</RadioText>
                  <Radio /><RadioText>操作禁止</RadioText>
                </RadioRow>
              </Group>
              <Group $h={42} $mt={16}>
                <Legend>アラーム一時除外</Legend>
                <RadioRow $h={42}>
                  <RadioLabel>一時除外 :</RadioLabel>
                  <Radio $on $ml={18} /><RadioText $w={62}>通常</RadioText>
                  <Radio /><RadioText>バイパス（一時除外）</RadioText>
                </RadioRow>
              </Group>
              <Group $h={42} $mt={18}>
                <Legend>SP設定方式</Legend>
                <RadioRow $h={42}>
                  <RadioLabel>SP設定 :</RadioLabel>
                  <Radio $on $ml={18} /><RadioText $w={62}>ローカル</RadioText>
                  <Radio /><RadioText>リモート/ローカル可能</RadioText>
                </RadioRow>
              </Group>
              <Group $h={128.5} $mt={18}>
                <Legend>ステータス</Legend>
                <StatusRows>
                  {["アラーム :", "通信異常 :", "PV異常 :", "演算停止 :"].map((l) => (
                    <StatusRow key={l}>
                      <StatusLabel>{l}</StatusLabel>
                      <Field $w={181} $h={21}>正常</Field>
                    </StatusRow>
                  ))}
                </StatusRows>
              </Group>
              <Group $h={72.5} $mt={21.5}>
                <Legend>パラメータ</Legend>
                <ParamRow>
                  <ParamLabel $w={15}>P :</ParamLabel><Field $w={68} $center>120.0</Field>
                  <ParamLabel $w={20} $ml={4}>%</ParamLabel>
                  <ParamLabel $w={13} $ml={0}>I :</ParamLabel><Field $w={68} $center>1500</Field>
                  <ParamLabel $w={20} $ml={4}>秒</ParamLabel>
                  <ParamLabel $w={16} $ml={0}>D :</ParamLabel><Field $w={68} $center>250</Field>
                  <ParamLabel $w={20} $ml={4}>秒</ParamLabel>
                  <FlatBtn $w={63} $h={26} $fs={16}>書込</FlatBtn>
                </ParamRow>
              </Group>
            </Stack>
          </TwoCols>
          <Group $h={94} $mt={15.5}>
            <Legend>偏差アラーム情報</Legend>
            <DevRow>
              <DevLabel $w={79}>警報設定値 :</DevLabel>
              <Field $w={67} $center $h={20}>30</Field>
              <Cel>℃</Cel>
              <DevLabel $w={72}>偏差 :</DevLabel>
              <Field $w={76} $center $h={20}>240.00</Field>
              <Cel>℃</Cel>
            </DevRow>
            <GridTable $mt={8} $ml={13} $w={798}>
              <colgroup>
                <TCol $w={68} /><TCol $w={81} /><TCol $w={124} /><TCol $w={143} /><TCol $w={382} />
              </colgroup>
              <tbody>
                <TRow $h={20.5}>
                  <td></td><td>アラーム</td><td>アラーム監視</td><td>アラームレベル</td><td>メッセージ</td>
                </TRow>
                <TRow $h={25}>
                  <td>偏差</td>
                  <td><CellInner><Field $w={67} $center $h={20}>正常</Field></CellInner></td>
                  <td>
                    <RadioCell $gap={0} $pl={9}>
                      <Sel on /><RText $w={22}>無効</RText>
                      <Sel on={false} ml={2} /><RText $w={30}>有効</RText>
                    </RadioCell>
                  </td>
                  <td>
                    <RadioCell $gap={0} $pl={6}>
                      <Sel on /><RText $w={36}>軽故障</RText>
                      <Sel on={false} ml={2} /><RText $w={36}>重故障</RText>
                    </RadioCell>
                  </td>
                  <td><CellInner><Field $w={372} $h={20}>PID-001(基本PID)_偏差警報</Field></CellInner></td>
                </TRow>
              </tbody>
            </GridTable>
          </Group>
        </DetailLeft>
        <Faceplate {...SMALL_PLATE} />
      </DetailTop>
      <Group $h={189} $mt={13.5} $w={952.5}>
        <Legend>上下限アラーム情報</Legend>
        <GridTable $mt={10} $ml={12} $w={929}>
          <colgroup>
            <TCol $w={69} /><TCol $w={80} /><TCol $w={130} /><TCol $w={144} /><TCol $w={79} /><TCol $w={427} />
          </colgroup>
          <tbody>
            <TRow $h={18.5}>
              <td></td><td>アラーム</td><td>アラーム監視</td><td>アラームレベル</td><td>しきい値</td><td>メッセージ</td>
            </TRow>
            {LIMITS.map((r) => (
              <TRow key={r.n} $h={26}>
                <td>{r.n}</td>
                <td><CellInner><Field $w={67} $center $h={20}>正常</Field></CellInner></td>
                <td>
                  <RadioCell $gap={0} $pl={9}>
                    <Sel on /><RText $w={22}>無効</RText>
                    <Sel on={false} ml={2} /><RText $w={30}>有効</RText>
                  </RadioCell>
                </td>
                <td>
                  <RadioCell $gap={0} $pl={7}>
                    <Sel on={!r.heavy} /><RText $w={36}>軽故障</RText>
                    <Sel on={r.heavy} ml={2} /><RText $w={36}>重故障</RText>
                  </RadioCell>
                </td>
                <td><CellInner><Field $w={67} $center $h={20}>{r.t}</Field></CellInner></td>
                <td><CellInner><Field $w={416} $h={20}>{r.m}</Field></CellInner></td>
              </TRow>
            ))}
          </tbody>
        </GridTable>
      </Group>
      <DialogBtns>
        <FlatBtn $w={85} $fs={12}>チューニング</FlatBtn>
        <FlatBtn $w={85} $fs={15}>適用</FlatBtn>
        <FlatBtn $w={85} $fs={15}>OK</FlatBtn>
        <FlatBtn $w={85} $fs={12}>キャンセル</FlatBtn>
      </DialogBtns>
    </DetailBody>
  </Win>
);

export default function App() {
  return (
    <Page>
      <Global />
      <Sidebar>
        <SideHead $center>代表警報</SideHead>
        <AlertStack>
          <AlertBox $bg="#ff0000" $fg="#a86a6a">重警報</AlertBox>
          <AlertBox $bg="#ff8c00" $fg="#a08a6a">軽警報</AlertBox>
          <AlertBox $bg="#666666" $fg="#aaaaaa">通信異常</AlertBox>
        </AlertStack>
        <SideHead>グラフィック</SideHead>
        <SideItem $h={30}>
          <SideIcon><MonitorIcon /></SideIcon>シンボル集
          <Chevron width="10" height="18" viewBox="0 0 10 18" fill="none" stroke="#222" strokeWidth="1.8"><path d="M1 1l8 8-8 8" /></Chevron>
        </SideItem>
        <SideItem $h={30}><SideIcon><MonitorIcon /></SideIcon>システム状態監視</SideItem>
        <SideHead>アラーム/イベント</SideHead>
        <SideItem $h={28.5}><SideIcon><AlarmIcon /></SideIcon>アラームサマリ</SideItem>
        <SideItem $h={28.5}><SideIcon><AlarmHistIcon /></SideIcon>アラーム履歴</SideItem>
        <SideItem $h={28.5}><SideIcon><AnnunIcon /></SideIcon>アナンシェータ</SideItem>
        <SideItem $h={28.5}><SideIcon><EventIcon /></SideIcon>イベント履歴</SideItem>
        <SideHead>監視</SideHead>
        <SideItem $h={30}><SideIcon><ListIcon /></SideIcon>信号リスト</SideItem>
        <SideItem $h={30}><SideIcon><GridIcon /></SideIcon>フェースプレート</SideItem>
        <SideHead>解析/集計</SideHead>
        <SideItem $h={30.7}><SideIcon><TrendIcon /></SideIcon>トレンドグラフ</SideItem>
        <SideItem $h={30.7}><SideIcon><CompareIcon /></SideIcon>比較トレンドグラフ</SideItem>
        <SideItem $h={30.6}><SideIcon><ReportIcon /></SideIcon>レポート</SideItem>
        <SideHead>設定</SideHead>
        <SideItem $h={30}><SideIcon><ThemeIcon /></SideIcon>ビジュアルテーマ</SideItem>
      </Sidebar>
      <Main>
        <TitleBar>
          <GridIcon c="#fff" />
          <TitleText>フェースプレート</TitleText>
          <TitleIcons />
        </TitleBar>
        <Toolbar>
          <SelectBox>
            [09]SYSMAC(PID)
            <SelectArrow><Tri d="d" s={10} /></SelectArrow>
          </SelectBox>
          <ToolBtn>前</ToolBtn>
          <ToolBtn>次</ToolBtn>
          <GearBtn><Gear /></GearBtn>
        </Toolbar>
        <Frame>
          {PLATES.map((p) => (
            <Column key={p.tag}>
              <Faceplate {...p} />
              <BigBtn $h={51} $mt={8}>チューニング</BigBtn>
              <BigBtn $h={52.5} $mt={6}>詳細設定</BigBtn>
            </Column>
          ))}
        </Frame>
        <AlarmBar>
          <AlarmList>
            {ALARMS.map((a, i) => (
              <AlarmRow key={i} $c={a.c}>
                <AlarmCell>2016/12/20 13:14:28</AlarmCell>
                <AlarmCell $center>MVO.003</AlarmCell>
                <AlarmCell $center>MVO-003</AlarmCell>
                <AlarmCell>{a.m}</AlarmCell>
              </AlarmRow>
            ))}
          </AlarmList>
          <ScrollCol>
            <Tri d="u" c="#aaa" s={8} />
            <Tri d="d" c="#aaa" s={8} />
          </ScrollCol>
          <SideBtns>
            <SideBtn>
              <svg width="18" height="16" viewBox="0 0 18 16" fill="none" stroke="#aaa" strokeWidth="1.6">
                <rect x="1" y="3" width="12" height="12" />
                <path d="M3.5 8l3 3 7-9" strokeWidth="2.2" />
              </svg>
              一括確認
            </SideBtn>
            <SideBtn>
              <svg width="18" height="16" viewBox="0 0 18 16" fill="none" stroke="#aaa" strokeWidth="1.5">
                <path d="M1 5h4l6-4v14l-6-4H1z" />
                <path d="M14 6v4M16.5 6v4" strokeWidth="1" />
              </svg>
              一時停止
            </SideBtn>
          </SideBtns>
        </AlarmBar>
      </Main>
      <StatusBar>
        <StatusCell $w={289}><span>USER</span><span>デフォルト管理者ユーザ</span></StatusCell>
        <StatusCell />
        <StatusCell $w={186} $right>2016/12/20 13:21:09</StatusCell>
      </StatusBar>
      <TuningWindow />
      <DetailWindow />
    </Page>
  );
}
